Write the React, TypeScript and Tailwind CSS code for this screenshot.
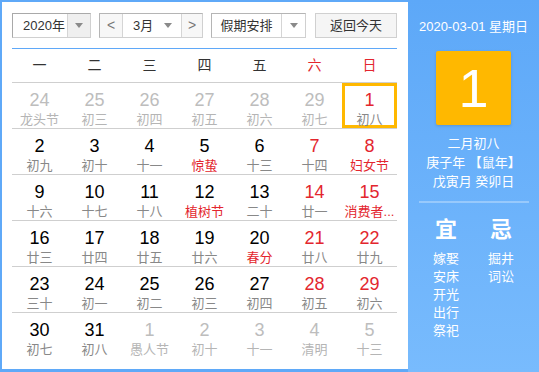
import React from "react";

type Cell = { d: number; l: string; kind: "other" | "cur" | "we"; red?: boolean; today?: boolean };

const rows: Cell[][] = [
  [
    { d: 24, l: "龙头节", kind: "other" },
    { d: 25, l: "初三", kind: "other" },
    { d: 26, l: "初四", kind: "other" },
    { d: 27, l: "初五", kind: "other" },
    { d: 28, l: "初六", kind: "other" },
    { d: 29, l: "初七", kind: "other" },
    { d: 1, l: "初八", kind: "we", today: true },
  ],
  [
    { d: 2, l: "初九", kind: "cur" },
    { d: 3, l: "初十", kind: "cur" },
    { d: 4, l: "十一", kind: "cur" },
    { d: 5, l: "惊蛰", kind: "cur", red: true },
    { d: 6, l: "十三", kind: "cur" },
    { d: 7, l: "十四", kind: "we" },
    { d: 8, l: "妇女节", kind: "we", red: true },
  ],
  [
    { d: 9, l: "十六", kind: "cur" },
    { d: 10, l: "十七", kind: "cur" },
    { d: 11, l: "十八", kind: "cur" },
    { d: 12, l: "植树节", kind: "cur", red: true },
    { d: 13, l: "二十", kind: "cur" },
    { d: 14, l: "廿一", kind: "we" },
    { d: 15, l: "消费者...", kind: "we", red: true },
  ],
  [
    { d: 16, l: "廿三", kind: "cur" },
    { d: 17, l: "廿四", kind: "cur" },
    { d: 18, l: "廿五", kind: "cur" },
    { d: 19, l: "廿六", kind: "cur" },
    { d: 20, l: "春分", kind: "cur", red: true },
    { d: 21, l: "廿八", kind: "we" },
    { d: 22, l: "廿九", kind: "we" },
  ],
  [
    { d: 23, l: "三十", kind: "cur" },
    { d: 24, l: "初一", kind: "cur" },
    { d: 25, l: "初二", kind: "cur" },
    { d: 26, l: "初三", kind: "cur" },
    { d: 27, l: "初四", kind: "cur" },
    { d: 28, l: "初五", kind: "we" },
    { d: 29, l: "初六", kind: "we" },
  ],
  [
    { d: 30, l: "初七", kind: "cur" },
    { d: 31, l: "初八", kind: "cur" },
    { d: 1, l: "愚人节", kind: "other" },
    { d: 2, l: "初十", kind: "other" },
    { d: 3, l: "十一", kind: "other" },
    { d: 4, l: "清明", kind: "other" },
    { d: 5, l: "十三", kind: "other" },
  ],
];

const weekdays = ["一", "二", "三", "四", "五", "六", "日"];
const yi = ["嫁娶", "安床", "开光", "出行", "祭祀"];
const ji = ["掘井", "词讼"];

function Arrow() {
  return (
    <svg width="8" height="5" viewBox="0 0 8 5">
      <path d="M0 0h8L4 5z" fill="#8a8a8a" />
    </svg>
  );
}

function DayCell({ c }: { c: Cell }) {
  const num =
    c.kind === "other" ? "text-[#bdbdbd]" : c.kind === "we" ? "text-[#e3262e]" : "text-black";
  const lunar = c.red
    ? "text-[#e3262e]"
    : c.kind === "other"
    ? "text-[#b5b5b5]"
    : "text-[#888]";
  return (
    <div
      className={`flex flex-col items-center h-[45px] ${
        c.today ? "border-[3px] border-[#ffb800] pt-[3px]" : "pt-[6px]"
      }`}
    >
      <div className={`text-[18px] leading-[22px] ${num}`}>{c.d}</div>
      <div className={`mt-[1px] text-[13px] leading-[16px] whitespace-nowrap ${lunar}`}>{c.l}</div>
    </div>
  );
}

export default function App() {
  return (
    <div className="w-[539px] h-[372px] flex bg-[#5fa9f8] font-['Liberation_Sans','Noto_Sans_CJK_SC',sans-serif]">
      <div className="w-[406px] mt-[2px] mb-[3px] ml-[2px] bg-white pt-[11px] pl-[10px] pr-[11px]">
        {/* toolbar */}
        <div className="flex items-center h-[25px] text-[13px] text-[#333]">
          <div className="flex h-full w-[79px] border border-[#a9a9a9] border-b-[#d0d0d0] border-r-[#d0d0d0]">
            <div className="flex-1 flex items-center pl-[10px]">2020年</div>
            <div className="w-[23px] bg-[#efefef] border-l border-[#d5d5d5] flex items-center justify-center">
              <Arrow />
            </div>
          </div>
          <div className="ml-[8px] flex h-full w-[104px] border border-[#b5b5b5] border-b-[#d0d0d0] border-r-[#d0d0d0]">
            <div className="w-[22px] bg-[#f7f7f7] flex items-center justify-center text-[#777] text-[14px]">&lt;</div>
            <div className="w-[60px] border-x border-[#d5d5d5] flex items-center pl-[10px] pr-[9px] justify-between">
              <span>3月</span>
              <Arrow />
            </div>
            <div className="flex-1 bg-[#f7f7f7] flex items-center justify-center text-[#777] text-[14px]">&gt;</div>
          </div>
          <div className="ml-[8px] flex h-full w-[95px] border border-[#b5b5b5] border-b-[#d0d0d0] border-r-[#d0d0d0]">
            <div className="flex-1 flex items-center justify-center">假期安排</div>
            <div className="w-[24px] border-l border-[#d5d5d5] flex items-center justify-center">
              <Arrow />
            </div>
          </div>
          <div className="ml-[9px] h-full w-[82px] border border-[#d0d0d0] bg-[#f5f5f5] flex items-center justify-center">
            返回今天
          </div>
        </div>

        {/* weekday header */}
        <div className="mt-[10px] border-t border-[#5fa8f8] grid grid-cols-7 h-[34px] items-center text-[14px] text-[#333]">
          {weekdays.map((w, i) => (
            <div key={w} className={`text-center ${i >= 5 ? "text-[#e3262e]" : ""}`}>
              {w}
            </div>
          ))}
        </div>

        {/* days */}
        {rows.map((r, i) => (
          <div key={i} className="grid grid-cols-7 border-t border-[#cfcfcf]">
            {r.map((c, j) => (
              <DayCell key={j} c={c} />
            ))}
          </div>
        ))}
      </div>

      {/* right panel */}
      <div className="flex-1 bg-gradient-to-b from-[#5da8f8] to-[#78bbfd] text-white flex flex-col items-center pt-[18px]">
        <div className="text-[13px] leading-[18px]">2020-03-01 星期日</div>
        <div className="mt-[15px] w-[75px] h-[74px] bg-[#ffb800] rounded-[2px] shadow-[0_1px_3px_rgba(0,0,0,0.15)] flex items-center justify-center text-[54px] leading-none">
          1
        </div>
        <div className="mt-[9px] text-[13px] leading-[19px] text-center">
          <div>二月初八</div>
          <div>庚子年 【鼠年】</div>
          <div>戊寅月 癸卯日</div>
        </div>
        <div className="mt-[10px] h-[2px] w-[110px] bg-white/30" />
        <div className="mt-[14px] flex">
          <div className="w-[55px] flex flex-col items-center">
            <div className="text-[22px] leading-[26px] font-semibold">宜</div>
            <div className="mt-[7px] text-[13px] leading-[18px] flex flex-col items-center">
              {yi.map((s) => (
                <div key={s}>{s}</div>
              ))}
            </div>
          </div>
          <div className="w-[55px] flex flex-col items-center">
            <div className="text-[22px] leading-[26px] font-semibold">忌</div>
            <div className="mt-[7px] text-[13px] leading-[18px] flex flex-col items-center">
              {ji.map((s) => (
                <div key={s}>{s}</div>
              ))}
            </div>
          </div>
        </div>
      </div>
    </div>
  );
}
